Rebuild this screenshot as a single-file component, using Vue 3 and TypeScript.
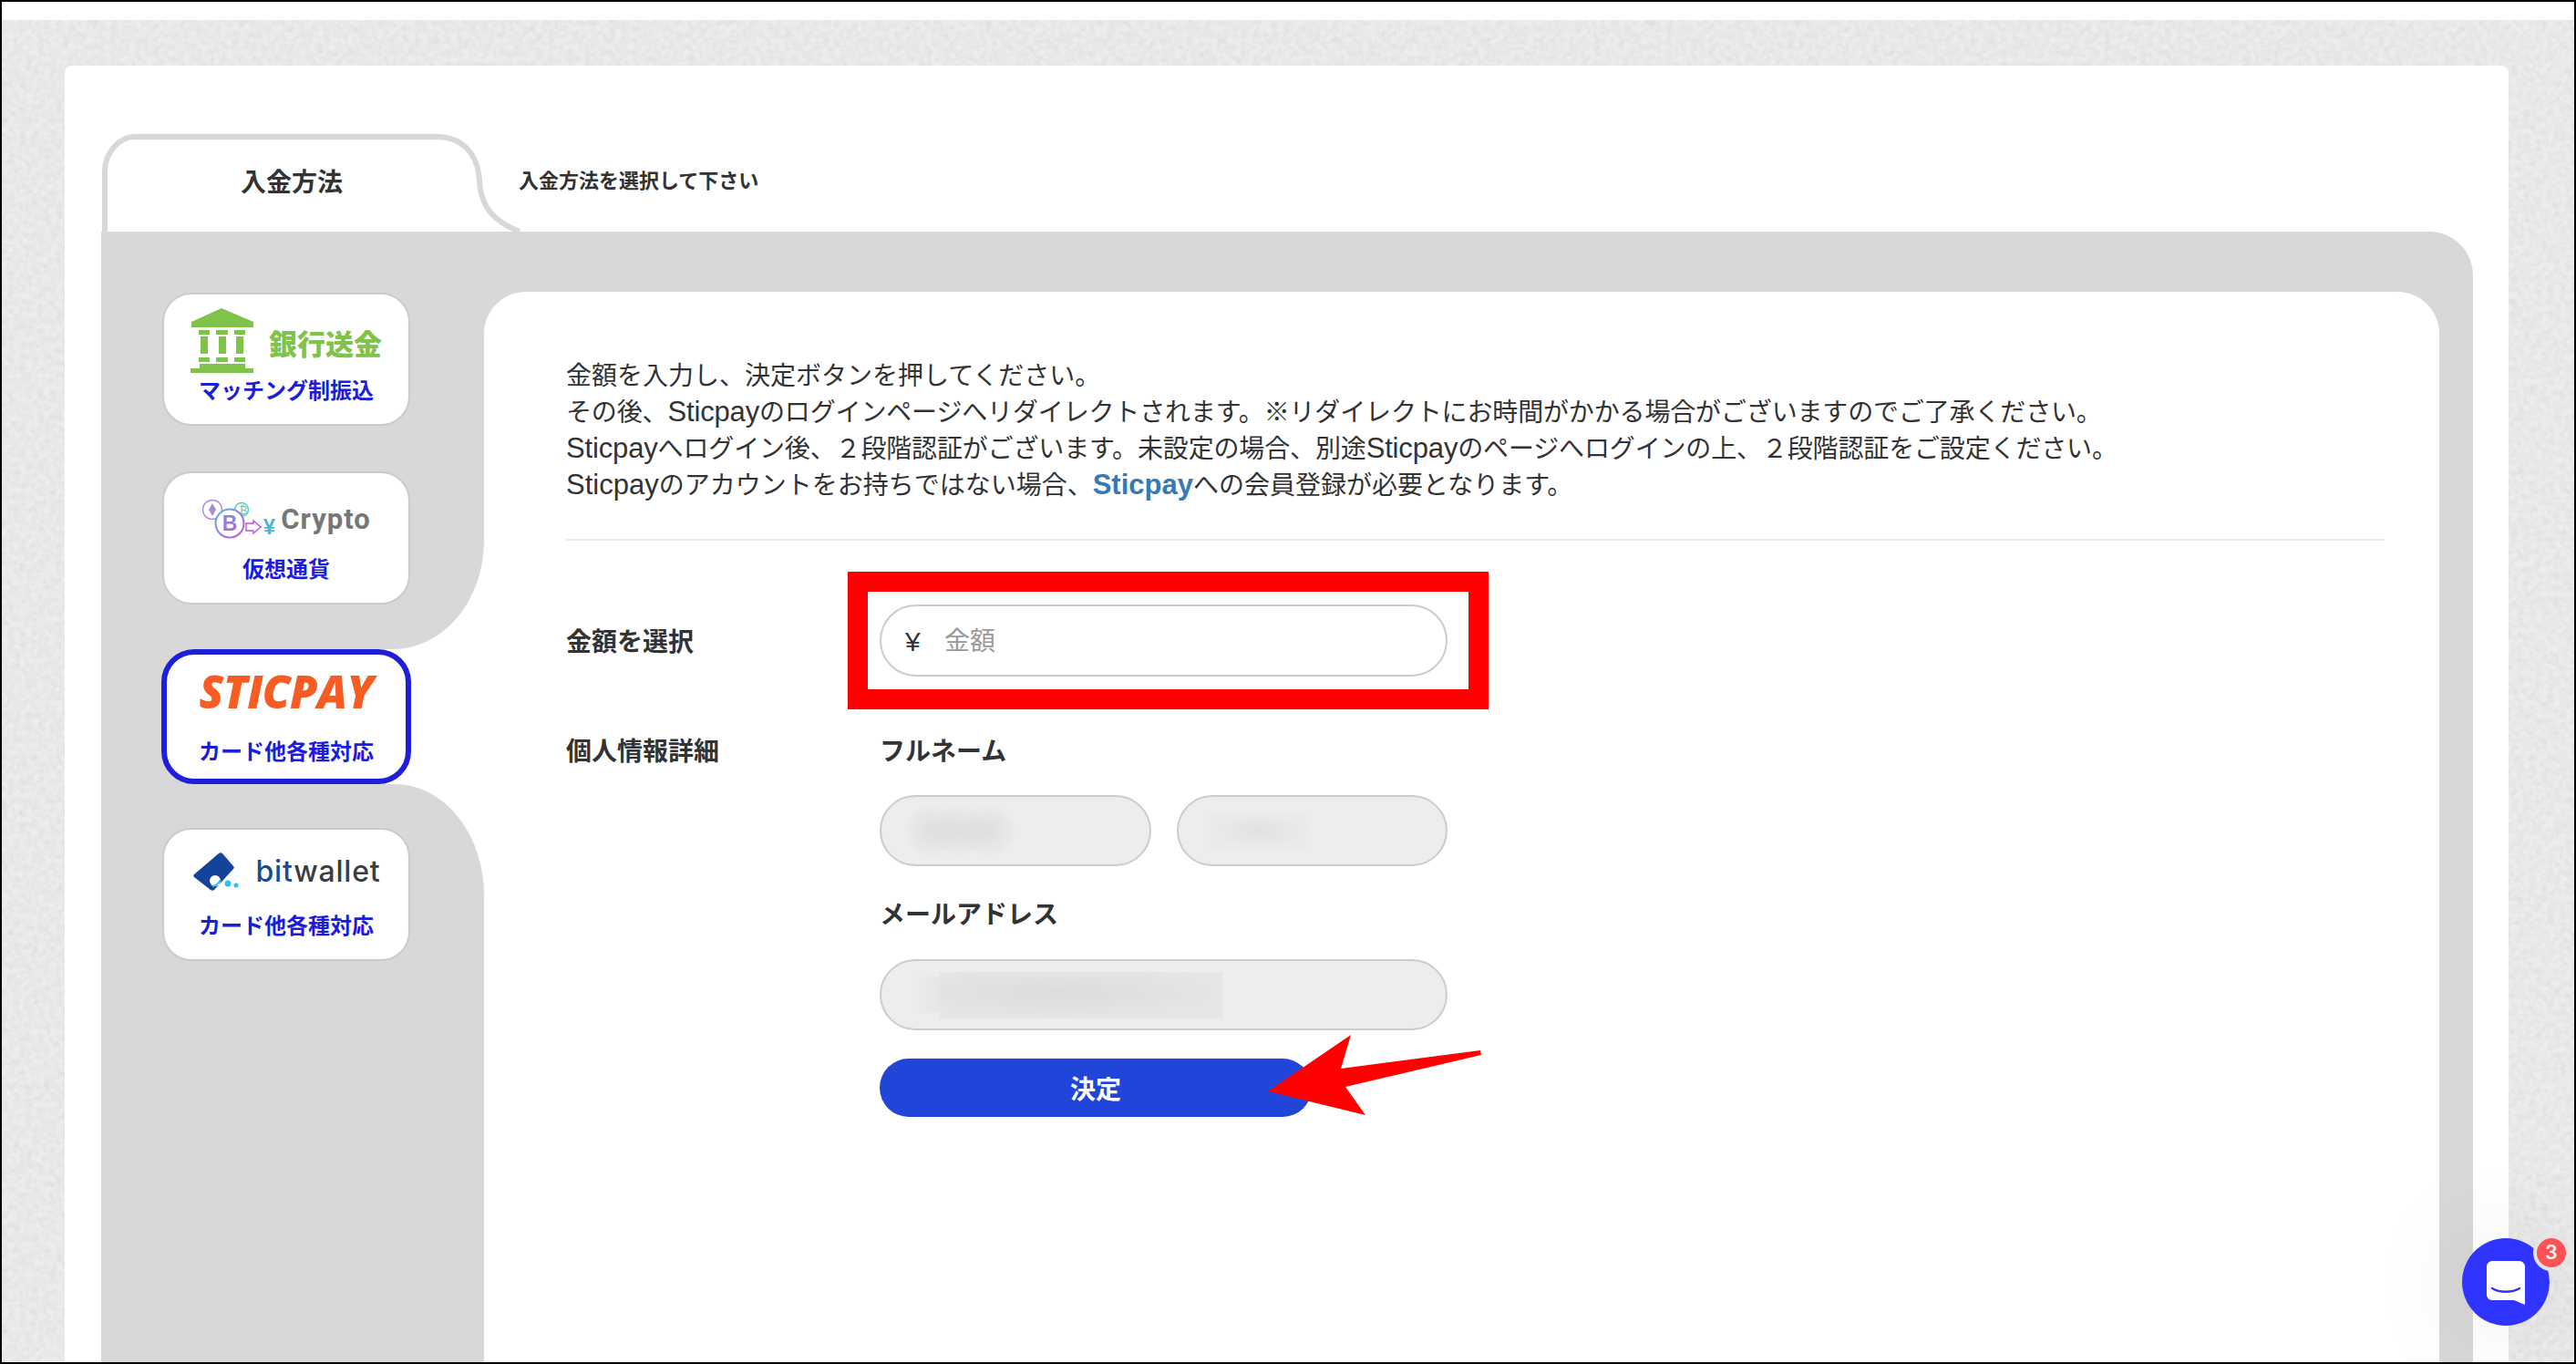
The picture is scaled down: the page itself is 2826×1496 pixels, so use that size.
<script setup lang="ts">
// ステップの説明文は固定なのでテンプレートに直接書く
const sticpay = 'Sticpay';
</script>

<template>
  <div class="shot">
    <div class="strip"></div>
    <div class="page">
      <svg class="grain" width="100%" height="100%" aria-hidden="true">
        <filter id="paper">
          <feTurbulence type="fractalNoise" baseFrequency="0.15" numOctaves="3" seed="4" />
          <feColorMatrix type="matrix" values="0 0 0 0 0  0 0 0 0 0  0 0 0 0 0  0.07 0.07 0 0 -0.05" />
        </filter>
        <rect width="100%" height="100%" filter="url(#paper)" />
      </svg>

      <main class="card">
        <div class="tabs">
          <div class="tab">
            <svg class="tab__shape" width="470" height="107" viewBox="0 0 470 107" aria-hidden="true">
              <path
                d="M3 107 V40 C3 20 20 3 35 3 H368 C395 3 410 22 413 43 C415 55 414 62 417 68 C421 85 435 98 458 107"
                fill="#fff"
                stroke="#d8d8d8"
                stroke-width="6"
              />
            </svg>
            <span class="tab__label">入金方法</span>
          </div>
          <p class="tabs__hint">入金方法を選択して下さい</p>
        </div>

        <div class="panel">
          <aside class="side">
            <div class="side__top">
              <button class="method" type="button">
                <span class="method__logo">
                  <svg width="70" height="72" viewBox="0 0 70 72" aria-hidden="true">
                    <g fill="#7fc34a">
                      <path d="M34 0 L69 15 V21 H1 V15 Z" />
                      <rect x="9" y="24" width="12" height="5" />
                      <rect x="28" y="24" width="13" height="5" />
                      <rect x="48" y="24" width="12" height="5" />
                      <rect x="11" y="31" width="8" height="19" />
                      <rect x="31" y="31" width="8" height="19" />
                      <rect x="50" y="31" width="8" height="19" />
                      <rect x="9" y="54" width="12" height="5" />
                      <rect x="28" y="54" width="13" height="5" />
                      <rect x="48" y="54" width="12" height="5" />
                      <path d="M10 61 H60 V66 H69 V71 H0 V66 H10 Z" />
                    </g>
                  </svg>
                  <span class="bank-text">銀行送金</span>
                </span>
                <span class="method__label">マッチング制振込</span>
              </button>

              <button class="method" type="button">
                <span class="method__logo">
                  <svg width="82" height="46" viewBox="0 0 82 46" aria-hidden="true">
                    <defs>
                      <linearGradient id="coin" x1="0" y1="0" x2="1" y2="1">
                        <stop offset="0" stop-color="#5cb6e0" />
                        <stop offset="1" stop-color="#c34fe0" />
                      </linearGradient>
                      <linearGradient id="coinB" x1="0" y1="0" x2="0" y2="1">
                        <stop offset="0" stop-color="#7d8fe0" />
                        <stop offset="1" stop-color="#c25fd8" />
                      </linearGradient>
                    </defs>
                    <circle cx="12" cy="12" r="10.5" fill="none" stroke="#b08ae0" stroke-width="1.4" />
                    <path d="M12 5 L16 12 L12 19 L8 12 Z" fill="#a98bd8" />
                    <circle cx="44" cy="12" r="7.5" fill="none" stroke="#4fd0c0" stroke-width="1.4" />
                    <text x="46" y="17" class="coin-mini">₿</text>
                    <circle cx="31" cy="27" r="15.5" fill="#fff" stroke="url(#coin)" stroke-width="2" />
                    <text x="31" y="35" class="coin-b">B</text>
                    <path d="M49 27 H57 V24 L65 31 L57 38 V35 H49 Z" fill="#fff" stroke="#c34fe0" stroke-width="1.4" />
                    <text x="81" y="39" class="coin-yen">¥</text>
                  </svg>
                  <span class="crypto-text">Crypto</span>
                </span>
                <span class="method__label">仮想通貨</span>
              </button>
            </div>

            <div class="side__active">
              <button class="method method--active" type="button">
                <span class="method__logo">
                  <span class="sticpay-text">STICPAY</span>
                </span>
                <span class="method__label">カード他各種対応</span>
              </button>
            </div>

            <div class="side__bottom">
              <button class="method" type="button">
                <span class="method__logo method__logo--wallet">
                  <svg width="52" height="44" viewBox="0 0 52 44" aria-hidden="true">
                    <path
                      d="M29 2 C30 1 32 1 33 2 L45 16 C46 17 46 18 45 19 L24 42 C23 43 21 43 20 42 L2 28 C1 27 1 26 2 25 Z"
                      fill="#15439a"
                    />
                    <circle cx="25" cy="32" r="6" fill="#fff" />
                    <circle cx="39" cy="35" r="3.5" fill="#2fc0f0" />
                    <circle cx="48" cy="37" r="2.5" fill="#2fc0f0" />
                    <path d="M22 38 C25 38 29 35 31 31" fill="none" stroke="#2fc0f0" stroke-width="2" />
                  </svg>
                  <span class="wallet-text"><span class="wallet-text__bit">bit</span>wallet</span>
                </span>
                <span class="method__label">カード他各種対応</span>
              </button>
            </div>
          </aside>

          <section class="content">
            <div class="intro">
              <p>金額を入力し、決定ボタンを押してください。</p>
              <p class="intro__tight">その後、<span class="intro__brand">{{ sticpay }}</span>のログインページへリダイレクトされます。※リダイレクトにお時間がかかる場合がございますのでご了承ください。</p>
              <p class="intro__tight"><span class="intro__brand">{{ sticpay }}</span>へログイン後、２段階認証がございます。未設定の場合、別途<span class="intro__brand">{{ sticpay }}</span>のページへログインの上、２段階認証をご設定ください。</p>
              <p><span class="intro__brand">{{ sticpay }}</span>のアカウントをお持ちではない場合、<a class="intro__brand intro__link">{{ sticpay }}</a>への会員登録が必要となります。</p>
            </div>

            <form class="form" @submit.prevent>
              <div class="form__row form__row--amount">
                <span class="form__title">金額を選択</span>
                <div class="amount">
                  <div class="field field--amount">
                    <span class="field__yen">¥</span>
                    <span class="field__placeholder">金額</span>
                  </div>
                  <div class="amount__mark"></div>
                </div>
              </div>

              <div class="form__row">
                <span class="form__title">個人情報詳細</span>
                <div class="details">
                  <span class="form__title">フルネーム</span>
                  <div class="details__names">
                    <div class="field field--filled">
                      <span class="smudge smudge--a"></span>
                      <span class="smudge smudge--a smudge--tight"></span>
                      <span class="smudge smudge--a smudge--tight"></span>
                    </div>
                    <div class="field field--filled field--pad">
                      <span class="smudge smudge--b"></span>
                    </div>
                  </div>
                  <span class="form__title details__mail">メールアドレス</span>
                  <div class="field field--filled field--mail">
                    <span class="smudge smudge--c"></span>
                    <span class="smudge smudge--d"></span>
                  </div>
                  <button class="submit" type="submit">決定</button>
                </div>
              </div>
            </form>
          </section>
        </div>
      </main>
    </div>

    <svg class="arrow" width="240" height="94" viewBox="1390 1133 240 94" aria-hidden="true">
      <path d="M1391 1197 L1482 1135 L1471 1172 L1624 1152 L1625 1157 L1476 1192 L1498 1223 Z" fill="#ff0000" />
    </svg>

    <div class="chat">
      <svg width="44" height="50" viewBox="0 0 44 50" aria-hidden="true">
        <path
          d="M7 1 H37 C40 1 43 4 43 7 V49 L31 44 H7 C4 44 1 41 1 38 V7 C1 4 4 1 7 1 Z"
          fill="#fff"
        />
        <path d="M7 31 C15 36 29 36 37 31" fill="none" stroke="#3034ff" stroke-width="2.4" stroke-linecap="round" />
      </svg>
      <span class="chat__badge">3</span>
    </div>
  </div>
</template>

<style scoped>
.shot {
  position: relative;
  display: flex;
  flex-direction: column;
  box-sizing: border-box;
  width: 2826px;
  height: 1496px;
  overflow: hidden;
  border: 2px solid #000;
  background: #fff;
  color: #333;
  font-family: "Liberation Sans", "Noto Sans CJK JP", sans-serif;
  font-size: 28px;
  line-height: 40px;
}

.strip {
  flex: none;
  height: 20px;
}

.page {
  position: relative;
  display: flex;
  flex: 1;
  min-height: 0;
  padding: 50px 72px 0 69px;
  background: #ededed;
}

.grain {
  position: absolute;
  inset: 0;
}

.card {
  position: relative;
  display: flex;
  flex: 1;
  flex-direction: column;
  min-width: 0;
  padding: 75px 39px 0 40px;
  border-radius: 8px 8px 0 0;
  background: #fff;
}

.tabs {
  display: flex;
  flex: none;
  align-items: center;
  height: 107px;
  padding-left: 1px;
}

.tab {
  position: relative;
  flex: none;
  width: 416px;
  height: 107px;
}

.tab__shape {
  position: absolute;
  top: 0;
  left: 0;
}

.tab__label {
  position: relative;
  display: block;
  padding-top: 34px;
  font-weight: 700;
  text-align: center;
}

.tabs__hint {
  margin: -4px 0 0 41px;
  font-size: 22px;
  font-weight: 700;
}

.panel {
  display: flex;
  flex: 1;
  padding-right: 37px;
  border-radius: 0 48px 0 0;
  background: #d8d8d8;
}

.side {
  display: flex;
  flex: none;
  flex-direction: column;
  width: 420px;
  background: #fff;
}

.side__top {
  display: flex;
  flex-direction: column;
  gap: 50px;
  padding: 67px 0 49px 67px;
  border-radius: 0 0 100px 0 / 0 0 119px 0;
  background: #d8d8d8;
}

.side__active {
  padding-left: 66px;
  background: linear-gradient(90deg, #d8d8d8 50%, #fff 50%);
}

.side__bottom {
  flex: 1;
  padding: 48px 0 0 67px;
  border-radius: 0 98px 0 0 / 0 122px 0 0;
  background: #d8d8d8;
}

.method {
  display: flex;
  flex-direction: column;
  align-items: stretch;
  justify-content: flex-start;
  box-sizing: border-box;
  width: 272px;
  height: 146px;
  padding: 0;
  border: 2px solid #cbcbcb;
  border-radius: 32px;
  background: #fff;
  font-family: inherit;
}

.method--active {
  width: 274px;
  height: 148px;
  border: 6px solid #1f1fdb;
  border-radius: 36px;
}

.method__logo {
  display: flex;
  flex: none;
  align-items: center;
  justify-content: center;
  box-sizing: border-box;
  height: 91px;
  padding-top: 10px;
}

.method--active .method__logo {
  height: 92px;
}

.method__logo--wallet {
  gap: 18px;
  padding-top: 0;
}

.method__label {
  display: block;
  color: #1c1cdc;
  font-size: 24px;
  font-weight: 700;
  line-height: 30px;
  text-align: center;
}

.bank-text {
  margin: 10px 0 0 16px;
  color: #7fc34a;
  font-size: 31px;
  font-weight: 900;
  line-height: 1;
}

.crypto-text {
  margin-left: 5px;
  color: #777;
  font-family: Roboto, sans-serif;
  font-size: 31px;
  font-weight: 700;
  letter-spacing: 1px;
  line-height: 1;
}

.coin-b {
  fill: url(#coinB);
  font-family: "Liberation Sans", sans-serif;
  font-size: 23px;
  font-weight: 700;
  text-anchor: middle;
}

.coin-mini {
  fill: #4fd0c0;
  font-family: "DejaVu Sans", sans-serif;
  font-size: 12px;
  text-anchor: middle;
}

.coin-yen {
  fill: #4fb8c8;
  font-family: "Liberation Sans", sans-serif;
  font-size: 24px;
  font-weight: 700;
  text-anchor: end;
}

.sticpay-text {
  margin-bottom: 21px;
  color: #f75d23;
  font-family: "Open Sans", sans-serif;
  font-size: 49px;
  font-style: italic;
  font-weight: 800;
  letter-spacing: -0.6px;
  line-height: 1;
}

.wallet-text {
  color: #3a3d42;
  font-family: Inter, sans-serif;
  font-size: 32px;
  font-weight: 500;
  letter-spacing: 0.8px;
  line-height: 1;
}

.wallet-text__bit {
  color: #1d4a8f;
}

.content {
  flex: 1;
  min-width: 0;
  margin-top: 66px;
  padding: 73px 60px 0 90px;
  border-radius: 46px 46px 0 0;
  background: #fff;
}

.intro {
  padding-bottom: 38px;
  border-bottom: 2px solid #e8eded;
}

.intro p {
  margin: 0;
}

.intro__tight {
  letter-spacing: -0.15px;
}

.intro__brand {
  font-size: 31px;
  line-height: 1;
}

.intro__link {
  color: #337ab7;
  font-weight: 700;
}

.form__row {
  display: grid;
  grid-template-columns: 344px 474px;
}

.form__row--amount {
  align-items: center;
  margin: 70px 0 61px;
}

.form__title {
  display: block;
  margin-bottom: -2px;
  padding-top: 2px;
  font-weight: 700;
}

.amount {
  position: relative;
  width: 623px;
}

.amount__mark {
  position: absolute;
  inset: -36px -45px -36px -35px;
  border: 22px solid #ff0000;
}

.field {
  display: flex;
  align-items: center;
  box-sizing: border-box;
  height: 78px;
  border: 2px solid #ccc;
  border-radius: 40px;
  background: #fff;
}

.field--amount {
  height: 79px;
  padding: 2px 0 0 26px;
}

.field__yen {
  width: 43px;
  font-size: 30px;
}

.field__placeholder {
  color: #999;
}

.field--filled {
  min-width: 0;
  padding-left: 28px;
  background: #ededed;
}

.field--pad {
  padding-left: 34px;
}

.field--mail {
  width: 623px;
  padding-left: 33px;
}

.details {
  width: 623px;
}

.details__names {
  display: grid;
  grid-template-columns: 298px 297px;
  gap: 28px;
  margin-top: 29px;
}

.details__mail {
  margin-top: 32px;
  margin-bottom: 28px;
}

.smudge {
  display: block;
  flex: none;
}

.smudge--a {
  width: 56px;
  height: 54px;
  border-radius: 50%;
  background: radial-gradient(closest-side, rgba(218, 218, 218, 0.75), rgba(218, 218, 218, 0.15));
}

.smudge--tight {
  margin-left: -25px;
}

.smudge--b {
  width: 107px;
  height: 40px;
  background: radial-gradient(closest-side, #e1e1e1, #ebebeb);
}

.smudge--c {
  width: 31px;
  height: 40px;
  background: linear-gradient(90deg, #ececec, #e6e6e6);
}

.smudge--d {
  width: 310px;
  height: 51px;
  background: radial-gradient(ellipse at 42% 45%, #dcdcdc, #e6e6e8 75%);
}

.submit {
  display: block;
  width: 474px;
  height: 64px;
  margin-top: 31px;
  padding: 0;
  border: 0;
  border-radius: 32px;
  background: #2145d9;
  color: #fff;
  font-family: inherit;
  font-size: 28px;
  font-weight: 700;
}

.arrow {
  position: absolute;
  top: 1131px;
  left: 1388px;
}

.chat {
  position: absolute;
  right: 27px;
  bottom: 40px;
  display: flex;
  align-items: center;
  justify-content: center;
  width: 96px;
  height: 96px;
  border-radius: 50%;
  background: #3034ff;
  box-shadow: 0 4px 120px rgba(0, 0, 0, 0.1);
}

.chat svg {
  margin-top: 2px;
}

.chat__badge {
  position: absolute;
  top: -4px;
  right: -22px;
  box-sizing: content-box;
  width: 32px;
  height: 32px;
  border: 4px solid #e4e4e4;
  border-radius: 50%;
  background: #ff5257;
  color: #fff;
  font-family: Inter, sans-serif;
  font-size: 21px;
  font-weight: 600;
  line-height: 32px;
  text-align: center;
}
</style>

<style>
body {
  margin: 0;
}
</style>
